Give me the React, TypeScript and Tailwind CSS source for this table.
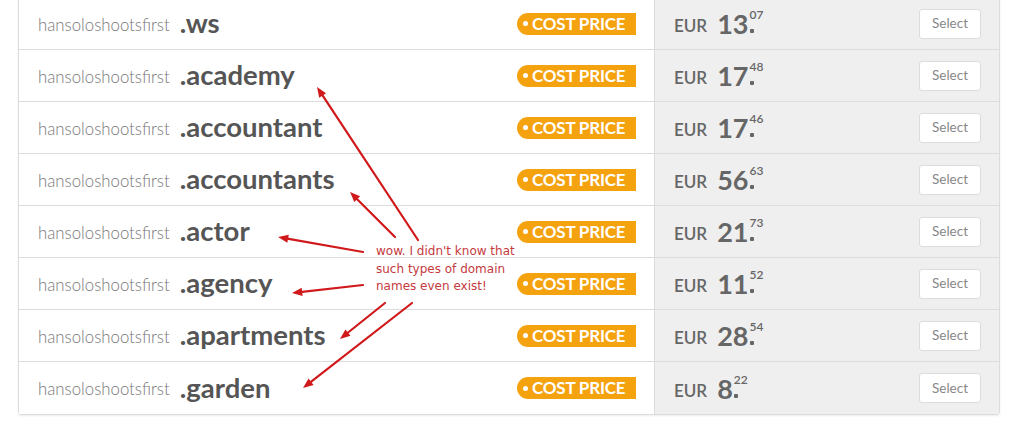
import React from "react";

interface Row {
  tld: string;
  whole: string;
  cents: string;
}

const rows: Row[] = [
  { tld: ".ws", whole: "13", cents: "07" },
  { tld: ".academy", whole: "17", cents: "48" },
  { tld: ".accountant", whole: "17", cents: "46" },
  { tld: ".accountants", whole: "56", cents: "63" },
  { tld: ".actor", whole: "21", cents: "73" },
  { tld: ".agency", whole: "11", cents: "52" },
  { tld: ".apartments", whole: "28", cents: "54" },
  { tld: ".garden", whole: "8", cents: "22" },
];

// arrows drawn over the table: [tailX, tailY, headX, headY]
const arrows: [number, number, number, number][] = [
  [418, 240, 317, 87],
  [395, 237, 350, 192],
  [363, 252, 278, 237],
  [363, 285, 292, 293],
  [385, 303, 340, 339],
  [412, 303, 303, 388],
];

function Arrow({ a }: { a: [number, number, number, number] }) {
  const [x1, y1, x2, y2] = a;
  const ang = Math.atan2(y2 - y1, x2 - x1);
  const len = 11;
  const spread = 0.38;
  const p1 = [x2 - len * Math.cos(ang - spread), y2 - len * Math.sin(ang - spread)];
  const p2 = [x2 - len * Math.cos(ang + spread), y2 - len * Math.sin(ang + spread)];
  const bx = x2 - 8 * Math.cos(ang);
  const by = y2 - 8 * Math.sin(ang);
  return (
    <g>
      <line x1={x1} y1={y1} x2={bx} y2={by} stroke="#d0191b" strokeWidth={2.2} strokeLinecap="round" />
      <polygon points={`${x2},${y2} ${p1[0]},${p1[1]} ${p2[0]},${p2[1]}`} fill="#d0191b" />
    </g>
  );
}

export default function App() {
  return (
    <div className="relative w-[1024px] h-[446px] overflow-hidden bg-white font-['Lato',sans-serif]">
      <div className="ml-[18px] mt-[-3px] w-[982px] border border-[#dcdcdc] rounded-b-[3px] shadow-[0_1px_2px_rgba(0,0,0,0.08)]">
        {rows.map((r, i) => (
          <div
            key={r.tld}
            className={`flex h-[52px] ${i < rows.length - 1 ? "border-b border-[#dcdcdc]" : ""}`}
          >
            <div className="flex w-[635px] items-center bg-white pl-[19px] pr-[18px]">
              <span className="text-[16.8px] font-light text-[#777] mt-[2px]">hansoloshootsfirst</span>
              <span className="ml-[10px] text-[27.5px] font-bold leading-none text-[#555] pb-[1px]">{r.tld}</span>
              <span className="ml-auto flex h-[22px] w-[119px] items-center rounded-l-full rounded-r-[2px] bg-[#f5a20f] pl-[6px]">
                <span className="h-[5px] w-[5px] rounded-full bg-white" />
                <span className="ml-[4px] text-[17px] font-bold tracking-[-0.2px] text-white">COST PRICE</span>
              </span>
            </div>
            <div className="flex flex-1 items-center border-l border-[#dcdcdc] bg-[#efefef] pl-[19px] pr-[18px]">
              <span className="text-[17px] font-semibold text-[#666] mt-[5px]">EUR</span>
              <span className="ml-[10px] flex items-stretch text-[#666]">
                <span className="text-[27px] font-bold leading-none">{r.whole}</span>
                <span className="ml-[1px] flex flex-col justify-between pb-[4px]">
                  <span className="mt-[-1px] text-[12px] font-semibold leading-none">{r.cents}</span>
                  <span className="h-[4px] w-[4px] rounded-[1px] bg-[#666]" />
                </span>
              </span>
              <button className="ml-auto h-[30px] w-[62px] rounded-[3px] border border-[#dddddd] bg-white text-[13.5px] text-[#888]">
                Select
              </button>
            </div>
          </div>
        ))}
      </div>

      <svg className="absolute left-0 top-0" width={1024} height={446}>
        {arrows.map((a, i) => (
          <Arrow key={i} a={a} />
        ))}
      </svg>

      <div className="absolute left-[376px] top-[243px] w-[170px] font-['DejaVu_Sans',sans-serif] text-[12px] leading-[17.5px] text-[#c53a3e]">
        <div>wow. I didn't know that</div>
        <div>such types of domain</div>
        <div>names even exist!</div>
      </div>
    </div>
  );
}
